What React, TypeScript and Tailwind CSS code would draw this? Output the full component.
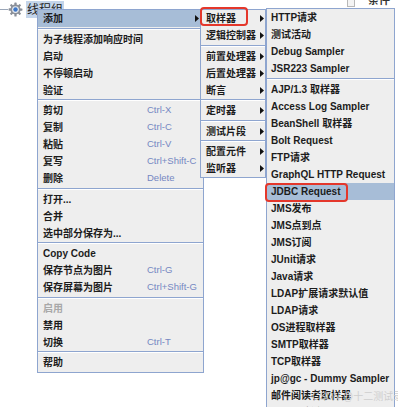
import React from 'react';

type Item = { label?: string; key?: string; arrow?: boolean; hl?: boolean; off?: boolean; sep?: boolean };

const font = { fontFamily: "'Liberation Sans', 'Noto Sans CJK SC', sans-serif" };

const addMenu: Item[] = [
  { label: '添加', arrow: true, hl: true },
  { sep: true },
  { label: '为子线程添加响应时间' },
  { label: '启动' },
  { label: '不停顿启动' },
  { label: '验证' },
  { sep: true },
  { label: '剪切', key: 'Ctrl-X' },
  { label: '复制', key: 'Ctrl-C' },
  { label: '粘贴', key: 'Ctrl-V' },
  { label: '复写', key: 'Ctrl+Shift-C' },
  { label: '删除', key: 'Delete' },
  { sep: true },
  { label: '打开...' },
  { label: '合并' },
  { label: '选中部分保存为...' },
  { sep: true },
  { label: 'Copy Code' },
  { label: '保存节点为图片', key: 'Ctrl-G' },
  { label: '保存屏幕为图片', key: 'Ctrl+Shift-G' },
  { sep: true },
  { label: '启用', off: true },
  { label: '禁用' },
  { label: '切换', key: 'Ctrl-T' },
  { sep: true },
  { label: '帮助' },
];

const kinds: Item[] = [
  { label: '取样器', arrow: true },
  { label: '逻辑控制器', arrow: true },
  { sep: true },
  { label: '前置处理器', arrow: true },
  { label: '后置处理器', arrow: true },
  { label: '断言', arrow: true },
  { sep: true },
  { label: '定时器', arrow: true },
  { sep: true },
  { label: '测试片段', arrow: true },
  { sep: true },
  { label: '配置元件', arrow: true },
  { label: '监听器', arrow: true },
];

const samplers: Item[] = [
  { label: 'HTTP请求' },
  { label: '测试活动' },
  { label: 'Debug Sampler' },
  { label: 'JSR223 Sampler' },
  { sep: true },
  { label: 'AJP/1.3 取样器' },
  { label: 'Access Log Sampler' },
  { label: 'BeanShell 取样器' },
  { label: 'Bolt Request' },
  { label: 'FTP请求' },
  { label: 'GraphQL HTTP Request' },
  { label: 'JDBC Request', hl: true },
  { label: 'JMS发布' },
  { label: 'JMS点到点' },
  { label: 'JMS订阅' },
  { label: 'JUnit请求' },
  { label: 'Java请求' },
  { label: 'LDAP扩展请求默认值' },
  { label: 'LDAP请求' },
  { label: 'OS进程取样器' },
  { label: 'SMTP取样器' },
  { label: 'TCP取样器' },
  { label: 'jp@gc - Dummy Sampler' },
  { label: '邮件阅读者取样器' },
  { label: 'SMIME断言' },
];

const Arrow = () => (
  <svg width="4" height="7" viewBox="0 0 4 7" className="shrink-0">
    <path d="M0 0 L4 3.5 L0 7 Z" fill="#111" />
  </svg>
);

function Rows({ items, pl, labelW, pr }: { items: Item[]; pl: string; labelW?: string; pr: string }) {
  return (
    <>
      {items.map((it, i) =>
        it.sep ? (
          <div key={i} className="h-[3.5px] flex flex-col justify-center">
            <div className="h-px bg-[#8ea5cf]" />
            <div className="h-px bg-white" />
          </div>
        ) : (
          <div key={i} className={`h-[17px] flex items-center ${pl} ${pr} ${it.hl ? 'bg-[#a7bdd7]' : ''}`}>
            <span className={`${labelW ?? 'flex-1'} whitespace-nowrap font-bold ${it.off ? 'text-[#a8a8a8]' : 'text-[#1c1c1c]'}`}>{it.label}</span>
            {it.key && <span className="whitespace-nowrap text-[9.5px] text-[#7587c2]">{it.key}</span>}
            {it.arrow && <span className="ml-auto"><Arrow /></span>}
          </div>
        )
      )}
    </>
  );
}

const Gear = () => (
  <svg width="15" height="15" viewBox="0 0 16 16">
    <g fill="#8a8f98">
      {[0, 45, 90, 135, 180, 225, 270, 315].map(a => (
        <rect key={a} x="6.8" y="0.6" width="2.4" height="3.4" rx="0.6" transform={`rotate(${a} 8 8)`} />
      ))}
      <circle cx="8" cy="8" r="5.4" />
    </g>
    <circle cx="8" cy="8" r="3.6" fill="#e9ecf1" />
    <circle cx="8" cy="8" r="2.4" fill="#3f78c9" />
  </svg>
);

export default function App() {
  return (
    <div className="relative w-[398px] h-[407px] overflow-hidden bg-white text-[10px]" style={font}>
      {/* tree node */}
      <div className="flex items-center h-[19px]">
        <div className="w-[8px] h-px bg-[#9aa6b8]" />
        <Gear />
        <span className="ml-[3px] px-[1px] h-[17px] flex items-center bg-[#c4d5ea] text-[12px] text-[#222]">线程组</span>
      </div>

      {/* right panel bits */}
      <div className="absolute left-[347px] top-[-2px] w-[8px] h-[9px] border border-[#b8b8b8] bg-[#f4f4f4]" />
      <span className="absolute left-[368px] top-[-8px] text-[11px] font-bold text-[#333]">条件</span>

      {/* main popup */}
      <div className="absolute left-[37px] top-[9px] w-[167px] bg-[#eeeeee] border border-[#8ea5cf] pb-[1px]">
        <Rows items={addMenu} pl="pl-[5px]" labelW="w-[104px]" pr="pr-[4px]" />
      </div>

      {/* add submenu */}
      <div className="absolute left-[200px] top-[9px] w-[66px] bg-[#eeeeee] border border-[#8ea5cf]">
        <Rows items={kinds} pl="pl-[5px]" pr="pr-[1px]" />
      </div>

      {/* sampler submenu */}
      <div className="absolute left-[266px] top-[8px] w-[129px] bg-[#eeeeee] border border-[#8ea5cf]">
        <Rows items={samplers} pl="pl-[4px]" pr="pr-[2px]" />
      </div>

      {/* red call-outs */}
      <div className="absolute left-[200px] top-[7px] w-[48px] h-[19px] border-2 border-[#e4372b] rounded-[4px]" />
      <div className="absolute left-[265px] top-[183px] w-[83px] h-[19px] border-2 border-[#e4372b] rounded-[4px]" />

      <span className="absolute left-[312px] top-[389px] text-[10px] text-[#cfcfcf] whitespace-nowrap">CSDN @十二测试录</span>
    </div>
  );
}
